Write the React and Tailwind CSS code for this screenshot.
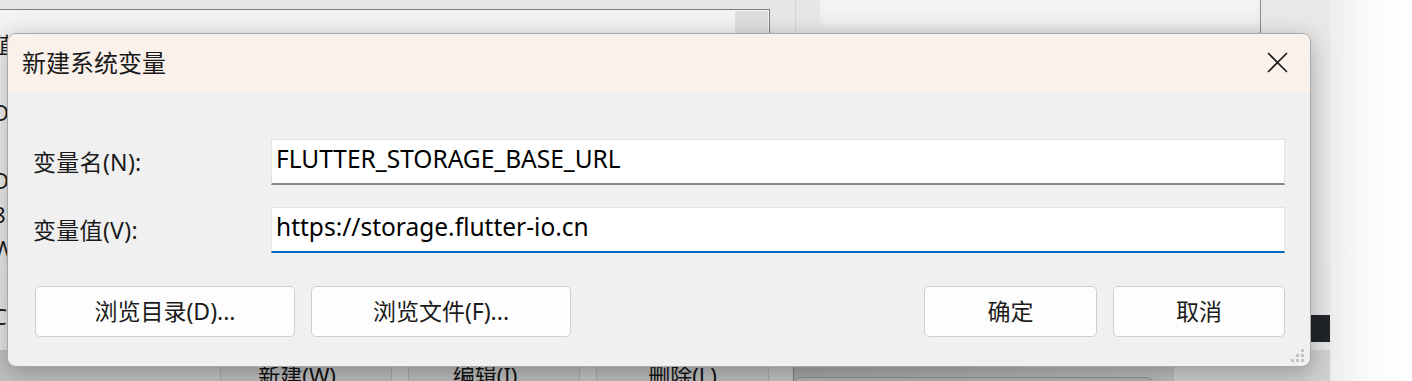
import React from 'react';

const FONT = "font-['Noto_Sans','Noto_Sans_CJK_SC',sans-serif]";

const ListEdge = () => {
  const rows = ['值', ':', 'D:', ':', 'D:', '8', 'W', ':', 'C'];
  return (
    <div className="absolute left-0 top-[27px] flex w-[8px] flex-col overflow-hidden text-[22px] leading-[34px] text-[#1a1a1a]">
      {rows.map((r, i) => (
        <span key={i} className="-ml-[7px] whitespace-nowrap">{r}</span>
      ))}
    </div>
  );
};

const ParentWindow = () => (
  <div className="absolute inset-0 bg-[#e6e6e6]">
    {/* list box */}
    <div className="absolute left-0 top-[9px] h-[341px] w-[770px] border-t border-r border-[#7c7c84] bg-gradient-to-b from-[#f3f3f3] to-[#e6e6e6]">
      <div className="absolute right-0 top-0 h-[40px] w-[35px] border border-[#f4f4f4] bg-[#dedede]" />
    </div>
    <ListEdge />
    <div className="absolute left-[795px] top-0 h-[34px] w-px bg-[#d2d2d2]" />
    {/* right panel */}
    <div className="absolute left-[820px] top-0 h-[34px] w-[440px] bg-gradient-to-b from-[#f6f6f6] to-[#ececec] shadow-[inset_0_-6px_10px_rgba(0,0,0,0.04)]" />
    <div className="absolute left-[1260px] top-0 h-[34px] w-px bg-[#8a8a8a]" />
    <div className="absolute left-[1261px] top-0 h-[262px] w-[69px] bg-[#e8e8e8]" />
    <div className="absolute left-[1310px] top-[315px] h-[27px] w-[20px] bg-[#212429]" />
    {/* white area at right */}
    <div className="absolute left-[1330px] top-0 h-full w-[82px] bg-gradient-to-r from-[#ededed] via-[#fbfbfb] to-white" />
    {/* bottom button strip */}
    <div className="absolute left-0 top-[350px] flex h-[31px] w-[1330px] bg-[#c2c2c2]">
      <div className="w-[220px]" />
      {[
        ['新建(W)...', 'w-[172px]'],
        ['编辑(I)...', 'w-[172px]'],
        ['删除(L)', 'w-[173px]'],
      ].map(([t, w], i) => (
        <div
          key={i}
          className={`mr-[16px] flex h-[50px] ${w} justify-center border-x border-[#a9a9a9] bg-[#bdbdbd] pt-[14px] text-[22px] leading-none text-[#111]`}
        >
          {t}
        </div>
      ))}
      <div className="ml-[8px] h-full w-px bg-[#7a7a7a]" />
      <div className="relative h-full w-[380px] bg-gradient-to-r from-[#a7a7a7] to-[#bdbdbd]">
        <div className="absolute left-0 top-[27px] h-[20px] w-[360px] rounded-t-[8px] border border-[#8e8e8e] bg-[#b3b3b3]" />
      </div>
      <div className="h-full flex-1 bg-[#d0d0d0]" />
    </div>
  </div>
);

const Field = ({ value, focused }) => (
  <div
    className={`flex h-[46px] items-center border border-[#e3e3e3] bg-white pb-[5px] pl-[4px] text-[24.5px] text-black ${
      focused ? 'border-b-2 border-b-[#0067c0]' : 'border-b-2 border-b-[#878787]'
    }`}
  >
    {value}
  </div>
);

const Btn = ({ children, w }) => (
  <button
    className={`flex h-[51px] ${w} items-center justify-center rounded-[5px] border border-[#cfcfcf] bg-[#fdfdfd] text-[23px] text-[#1b1b1b]`}
  >
    {children}
  </button>
);

export default function App() {
  return (
    <div className={`relative h-[381px] w-[1412px] overflow-hidden ${FONT}`}>
      <ParentWindow />

      {/* dialog */}
      <div className="absolute left-[7px] top-[33px] flex h-[334px] w-[1304px] flex-col overflow-hidden rounded-[9px] border border-[#a8a8a8] bg-[#f0f0f0] shadow-[0_6px_24px_rgba(0,0,0,0.28)]">
        <div className="flex h-[57px] shrink-0 items-center justify-between bg-[#f9f1ea] pl-[14px] pr-[22px]">
          <span className="text-[24px] text-[#1a1a1a]">新建系统变量</span>
          <svg width="21" height="21" viewBox="0 0 21 21" className="text-[#1a1a1a]">
            <path d="M1 1 L20 20 M20 1 L1 20" stroke="currentColor" strokeWidth="1.6" fill="none" />
          </svg>
        </div>

        <div className="relative flex flex-1 flex-col px-[25px] pt-[48px]">
          <div className="grid grid-cols-[238px_1fr] items-center gap-y-[22px]">
            <span className="text-[23px] tracking-[0.3px] text-[#1a1a1a]">变量名(N):</span>
            <Field value="FLUTTER_STORAGE_BASE_URL" />
            <span className="text-[23px] tracking-[0.3px] text-[#1a1a1a]">变量值(V):</span>
            <Field value="https://storage.flutter-io.cn" focused />
          </div>

          <div className="mt-[33px] flex items-center pl-[2px]">
            <div className="flex gap-[16px]">
              <Btn w="w-[260px]">浏览目录(D)...</Btn>
              <Btn w="w-[260px]">浏览文件(F)...</Btn>
            </div>
            <div className="ml-auto flex gap-[16px]">
              <Btn w="w-[173px]">确定</Btn>
              <Btn w="w-[172px]">取消</Btn>
            </div>
          </div>

          {/* resize grip */}
          <svg width="14" height="14" viewBox="0 0 14 14" className="absolute bottom-[3px] right-[5px]">
            {[[10, 0], [5, 5], [10, 5], [0, 10], [5, 10], [10, 10]].map(([x, y], i) => (
              <rect key={i} x={x} y={y} width="3" height="3" fill="#c4c4c4" />
            ))}
          </svg>
        </div>
      </div>
    </div>
  );
}
